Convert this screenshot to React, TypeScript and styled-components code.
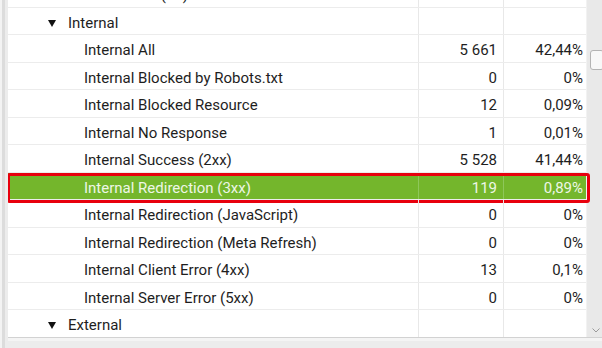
import { FC } from "react";
import styled, { createGlobalStyle } from "styled-components";

type RowData = {
  label: string;
  level: 1 | 2;
  count?: string;
  share?: string;
  expandable?: boolean;
  selected?: boolean;
};

const rows: RowData[] = [
  { label: "Internal URLs (All)", level: 1 },
  { label: "Internal", level: 1, expandable: true },
  { label: "Internal All", level: 2, count: "5 661", share: "42,44%" },
  { label: "Internal Blocked by Robots.txt", level: 2, count: "0", share: "0%" },
  { label: "Internal Blocked Resource", level: 2, count: "12", share: "0,09%" },
  { label: "Internal No Response", level: 2, count: "1", share: "0,01%" },
  { label: "Internal Success (2xx)", level: 2, count: "5 528", share: "41,44%" },
  {
    label: "Internal Redirection (3xx)",
    level: 2,
    count: "119",
    share: "0,89%",
    selected: true,
  },
  { label: "Internal Redirection (JavaScript)", level: 2, count: "0", share: "0%" },
  { label: "Internal Redirection (Meta Refresh)", level: 2, count: "0", share: "0%" },
  { label: "Internal Client Error (4xx)", level: 2, count: "13", share: "0,1%" },
  { label: "Internal Server Error (5xx)", level: 2, count: "0", share: "0%" },
  { label: "External", level: 1, expandable: true },
];

const GlobalStyle = createGlobalStyle`
  html, body {
    margin: 0;
    padding: 0;
    overflow: hidden;
    background: #ffffff;
  }
  body {
    font-family: Roboto, "Liberation Sans", Arial, sans-serif;
  }
`;

const App: FC = () => {
  return (
    <>
      <GlobalStyle />
      <Window>
        <SideStrip />
        <Main>
          <Body>
            <TableArea>
              <Table>
                {rows.map((row, i) => (
                  <Row key={i} selected={row.selected}>
                    <LabelCell level={row.level}>
                      {row.expandable && <Caret />}
                      {row.label}
                    </LabelCell>
                    <NumberCell padRight={6}>{row.count}</NumberCell>
                    <NumberCell padRight={3}>{row.share}</NumberCell>
                  </Row>
                ))}
              </Table>
            </TableArea>
            <ScrollTrack>
              <Thumb />
              <ArrowDown viewBox="0 0 8 5">
                <path d="M0.5 0.5 L4 4 L7.5 0.5" fill="none" stroke="#9a9a9a" strokeWidth="1" />
              </ArrowDown>
            </ScrollTrack>
          </Body>
          <BottomBar />
        </Main>
      </Window>
    </>
  );
};

export default App;

const Window = styled.div`
  display: flex;
  width: 602px;
  height: 348px;
  overflow: hidden;
`;

const SideStrip = styled.div`
  width: 8px;
  flex: none;
  background: linear-gradient(
    to right,
    #f3f3f3 0 2px,
    #dcdcdc 2px 5px,
    #ececec 5px 8px
  );
`;

const Main = styled.div`
  flex: 1;
  display: flex;
  flex-direction: column;
  min-width: 0;
`;

const Body = styled.div`
  flex: 1;
  display: flex;
  min-height: 0;
  overflow: hidden;
`;

const TableArea = styled.div`
  flex: 1;
  position: relative;
  z-index: 2;
`;

const Table = styled.div`
  display: flex;
  flex-direction: column;
  margin-top: -20px;
`;

const Row = styled.div<{ selected?: boolean }>`
  position: relative;
  display: grid;
  grid-template-columns: 410px 85px 83px;
  height: 27.5px;
  flex: none;
  box-sizing: border-box;
  border-bottom: 1px solid #ececec;
  background: ${(p) => (p.selected ? "#74b62c" : "transparent")};
  color: ${(p) => (p.selected ? "#eef7e6" : "#1e1e1e")};

  &::after {
    content: "";
    display: ${(p) => (p.selected ? "block" : "none")};
    position: absolute;
    top: 0;
    left: -1.5px;
    right: -3.5px;
    bottom: -3.5px;
    border: 3.5px solid #e8000d;
    border-radius: 3px;
    pointer-events: none;
  }

  & > div + div {
    border-left: 1px solid ${(p) => (p.selected ? "#8ec75a" : "#e8e8e8")};
  }
`;

const LabelCell = styled.div<{ level: 1 | 2 }>`
  display: flex;
  align-items: center;
  padding-left: ${(p) => (p.level === 1 ? 60 : 76)}px;
  padding-top: 4px;
  font-size: 15px;
  white-space: nowrap;
  position: relative;
`;

const Caret = styled.span`
  position: absolute;
  left: 40px;
  top: 50%;
  margin-top: -1px;
  width: 0;
  height: 0;
  border-left: 4.5px solid transparent;
  border-right: 4.5px solid transparent;
  border-top: 7px solid #111111;
`;

const NumberCell = styled.div<{ padRight: number }>`
  display: flex;
  align-items: center;
  justify-content: flex-end;
  padding-right: ${(p) => p.padRight}px;
  padding-top: 4px;
  font-size: 15px;
  white-space: nowrap;
`;

const ScrollTrack = styled.div`
  width: 16px;
  flex: none;
  position: relative;
  background: #e9e9e9;
  border-left: 1px solid #f2f2f2;
  box-sizing: border-box;
`;

const Thumb = styled.div`
  position: absolute;
  top: 50px;
  left: 3px;
  width: 14px;
  height: 20px;
  box-sizing: border-box;
  background: #f8f8f8;
  border: 1px solid #b4b4b4;
  border-radius: 3px;
`;

const ArrowDown = styled.svg`
  position: absolute;
  left: 5px;
  bottom: 4px;
  width: 8px;
  height: 5px;
`;

const BottomBar = styled.div`
  height: 11px;
  flex: none;
  box-sizing: border-box;
  border-top: 1px solid #d2d2d2;
  background: linear-gradient(to bottom, #f4f4f4 0 3px, #ececec 3px 100%);
`;
